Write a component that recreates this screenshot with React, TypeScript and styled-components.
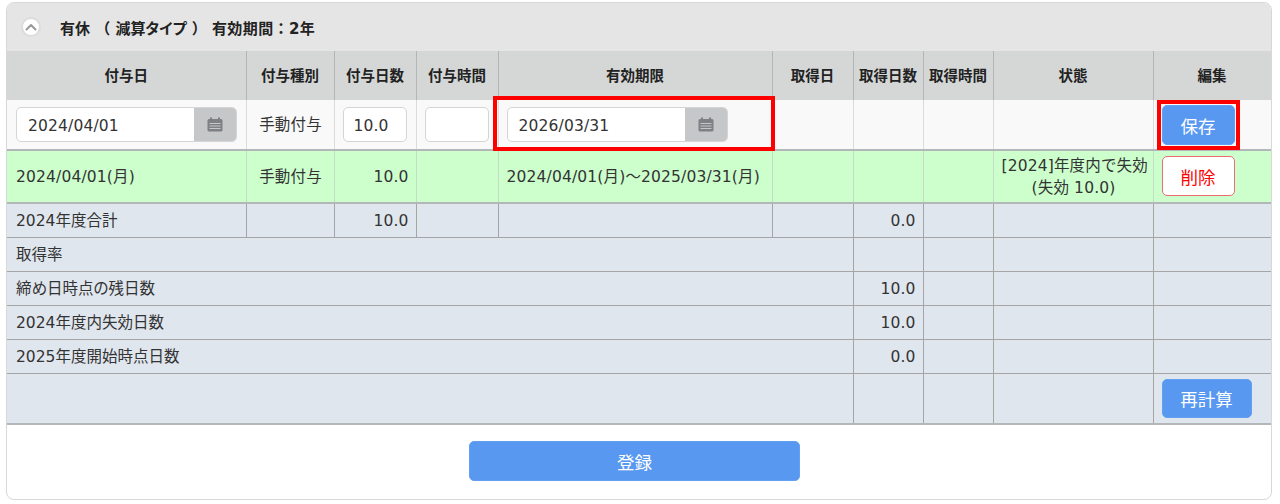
import React from "react";
import styled, { createGlobalStyle } from "styled-components";

const Global = createGlobalStyle`
  html, body { margin: 0; padding: 0; background: #fff; }
  body { font-family: "DejaVu Sans", "Noto Sans CJK JP", sans-serif; color: #333; }
`;

const Page = styled.div`
  width: 1280px;
  height: 504px;
  padding: 2px 8px 0 6px;
  box-sizing: border-box;
`;
const Panel = styled.section`
  width: 1266px;
  height: 498px;
  box-sizing: border-box;
  border: 1px solid #d8d8d8;
  border-radius: 8px;
  overflow: hidden;
  background: #fff;
  display: flex;
  flex-direction: column;
`;
const PanelHeader = styled.header`
  height: 48px;
  background: #e5e5e5;
  display: flex;
  align-items: center;
  gap: 19px;
  padding: 0 0 0 14px;
  flex: none;
`;
const Toggle = styled.span`
  width: 20px;
  height: 20px;
  border-radius: 50%;
  background: #fff;
  border: 2px solid #dcdcdc;
  box-sizing: border-box;
  display: flex;
  align-items: center;
  justify-content: center;
`;
const Title = styled.h2`
  margin: 0;
  font-size: 15px;
  font-weight: 700;
  color: #222;
  white-space: pre;
`;
const Kana = styled.span`
  font-feature-settings: "palt";
`;
const Period = styled.span`
  letter-spacing: 0.4px;
`;
const Table = styled.table`
  width: 1264px;
  table-layout: fixed;
  border-collapse: collapse;
  flex: none;
`;
const Th = styled.th`
  height: 49px;
  padding: 0 0 2px;
  background: #d5d7d7;
  border-left: 1px solid #b5b5b5;
  font-size: 14.5px;
  font-weight: 700;
  color: #222;
  text-align: center;
  box-sizing: border-box;
  &:first-child { border-left: 0; }
  &:last-child { border-right: 1px solid #b5b5b5; }
`;
const Tr = styled.tr<{ $tone: string; $h: number; $strong?: boolean }>`
  height: ${(p) => p.$h}px;
  background: ${(p) => p.$tone};
  border-bottom: ${(p) => (p.$strong ? 2 : 1)}px solid ${(p) => (p.$strong ? "#b4b7ba" : "#a5a5a5")};
`;
const Td = styled.td<{ $align?: string; $line?: string }>`
  padding: 1px 7px 0 8px;
  box-sizing: border-box;
  font-size: 15.5px;
  letter-spacing: 0.15px;
  line-height: 22px;
  color: #333;
  text-align: ${(p) => p.$align || "left"};
  border-left: 1px solid ${(p) => p.$line || "#a5a5a5"};
  white-space: nowrap;
  &:first-child { border-left: 0; padding-left: 9px; }
  &:last-child { border-right: 1px solid ${(p) => p.$line || "#a5a5a5"}; }
`;
const RowLabel = styled.span`
  letter-spacing: 0;
  font-feature-settings: "palt";
`;
const Highlight = styled.div<{ $inset: string; $w: number }>`
  position: relative;
  width: ${(p) => p.$w}px;
  &::after {
    content: "";
    position: absolute;
    pointer-events: none;
    border: 4px solid #f00;
    box-sizing: border-box;
    inset: ${(p) => p.$inset};
  }
`;
const DateGroup = styled.div`
  display: flex;
  width: 221px;
  height: 35px;
  margin-bottom: 2px;
  box-sizing: border-box;
  border: 1px solid #d5d5d5;
  border-radius: 5px;
  overflow: hidden;
  background: #fff;
`;
const DateText = styled.span`
  flex: 1;
  padding-left: 11px;
  font-size: 15.5px;
  letter-spacing: 0.15px;
  line-height: 37px;
  color: #333;
`;
const CalendarBox = styled.span`
  width: 42px;
  background: #c6c7c9;
  display: flex;
  align-items: center;
  justify-content: center;
`;
const NumberInput = styled.div`
  width: 64px;
  height: 35px;
  margin-bottom: 2px;
  box-sizing: border-box;
  border: 1px solid #d5d5d5;
  border-radius: 5px;
  background: #fff;
  padding-left: 10px;
  font-size: 15.5px;
  line-height: 37px;
`;
const Button = styled.button<{ $w: number; $h: number; $danger?: boolean }>`
  width: ${(p) => p.$w}px;
  height: ${(p) => p.$h}px;
  padding: 0;
  display: block;
  margin: 0 0 ${(p) => (p.$danger ? 2 : 0)}px 0;
  border-radius: 5px;
  box-sizing: border-box;
  border: ${(p) => (p.$danger ? "1.5px" : "1px")} solid ${(p) => (p.$danger ? "#e87070" : "#63a0f2")};
  background: ${(p) => (p.$danger ? "#fff" : "#5898f0")};
  color: ${(p) => (p.$danger ? "#f00" : "#fff")};
  font-family: inherit;
  font-size: 17.5px;
`;
const Footer = styled.div`
  flex: 1;
  display: flex;
  justify-content: center;
  padding: 16px 9px 0 0;
`;

const Chevron = () => (
  <svg width="12" height="8" viewBox="0 0 12 8" fill="none">
    <path d="M1.5 6.5L6 2l4.5 4.5" stroke="#9a9a9a" strokeWidth="2" strokeLinecap="round" strokeLinejoin="round" />
  </svg>
);
const Calendar = () => (
  <svg width="16" height="15" viewBox="0 0 16 15" fill="none">
    <rect x="0.5" y="2" width="15" height="12.5" rx="1.5" fill="#7d8084" />
    <rect x="3" y="0.5" width="2" height="3" fill="#7d8084" />
    <rect x="11" y="0.5" width="2" height="3" fill="#7d8084" />
    <path d="M2.5 6.5h11M2.5 9h11M2.5 11.5h11" stroke="#c6c7c9" strokeWidth="1" />
  </svg>
);

const widths = [239, 88, 82, 82, 274, 81, 70, 70, 160, 118];
const heads = ["付与日", "付与種別", "付与日数", "付与時間", "有効期限", "取得日", "取得日数", "取得時間", "状態", "編集"];
const BLUE = "#e0e6ee";
const GREEN = "#ccffcc";
const SOFT = "#dcdcdc";
const GREENLINE = "#c4dcc4";

const SpanRow = ({ label, value, h }: { label: string; value?: string; h: number }) => (
  <Tr $tone={BLUE} $h={h}>
    <Td colSpan={6}><RowLabel>{label}</RowLabel></Td>
    <Td $align="right">{value}</Td>
    <Td />
    <Td />
    <Td />
  </Tr>
);

export default function App() {
  return (
    <Page>
      <Global />
      <Panel>
        <PanelHeader>
          <Toggle><Chevron /></Toggle>
          <Title>有休 （ <Kana>減算タイプ</Kana> ） <Period>有効期間：2年</Period></Title>
        </PanelHeader>
        <Table>
          <colgroup>
            {widths.map((w, i) => <col key={i} style={{ width: w }} />)}
          </colgroup>
          <thead>
            <tr>{heads.map((h) => <Th key={h}>{h}</Th>)}</tr>
          </thead>
          <tbody>
            <Tr $tone="#f9f9f9" $h={50} $strong>
              <Td $line={SOFT}>
                <DateGroup><DateText>2024/04/01</DateText><CalendarBox><Calendar /></CalendarBox></DateGroup>
              </Td>
              <Td $align="center" $line={SOFT}>手動付与</Td>
              <Td $line={SOFT}><NumberInput>10.0</NumberInput></Td>
              <Td $line={SOFT}><NumberInput /></Td>
              <Td $line={SOFT}>
                <Highlight $w={221} $inset="-11px -47px -9px -14px">
                  <DateGroup><DateText>2026/03/31</DateText><CalendarBox><Calendar /></CalendarBox></DateGroup>
                </Highlight>
              </Td>
              <Td $line={SOFT} />
              <Td $line={SOFT} />
              <Td $line={SOFT} />
              <Td $line={SOFT} />
              <Td $line={SOFT}>
                <Highlight $w={73} $inset="-5px">
                  <Button $w={73} $h={40}>保存</Button>
                </Highlight>
              </Td>
            </Tr>
            <Tr $tone={GREEN} $h={53} $strong>
              <Td $line={GREENLINE}>2024/04/01(月)</Td>
              <Td $align="center" $line={GREENLINE}>手動付与</Td>
              <Td $align="right" $line={GREENLINE}>10.0</Td>
              <Td $line={GREENLINE} />
              <Td $line={GREENLINE}>2024/04/01(月)～2025/03/31(月)</Td>
              <Td $line={GREENLINE} />
              <Td $line={GREENLINE} />
              <Td $line={GREENLINE} />
              <Td $align="center" $line={GREENLINE}>[2024]年度内で失効<br />(失効 10.0)</Td>
              <Td $line={GREENLINE}><Button $w={73} $h={40} $danger>削除</Button></Td>
            </Tr>
            <Tr $tone={BLUE} $h={34}>
              <Td><RowLabel>2024年度合計</RowLabel></Td>
              <Td />
              <Td $align="right">10.0</Td>
              <Td />
              <Td />
              <Td />
              <Td $align="right">0.0</Td>
              <Td />
              <Td />
              <Td />
            </Tr>
            <SpanRow label="取得率" h={34} />
            <SpanRow label="締め日時点の残日数" value="10.0" h={34} />
            <SpanRow label="2024年度内失効日数" value="10.0" h={34} />
            <SpanRow label="2025年度開始時点日数" value="0.0" h={34} />
            <Tr $tone={BLUE} $h={51} $strong>
              <Td colSpan={6} />
              <Td />
              <Td />
              <Td />
              <Td><Button $w={90} $h={39}>再計算</Button></Td>
            </Tr>
          </tbody>
        </Table>
        <Footer><Button $w={331} $h={40}>登録</Button></Footer>
      </Panel>
    </Page>
  );
}
